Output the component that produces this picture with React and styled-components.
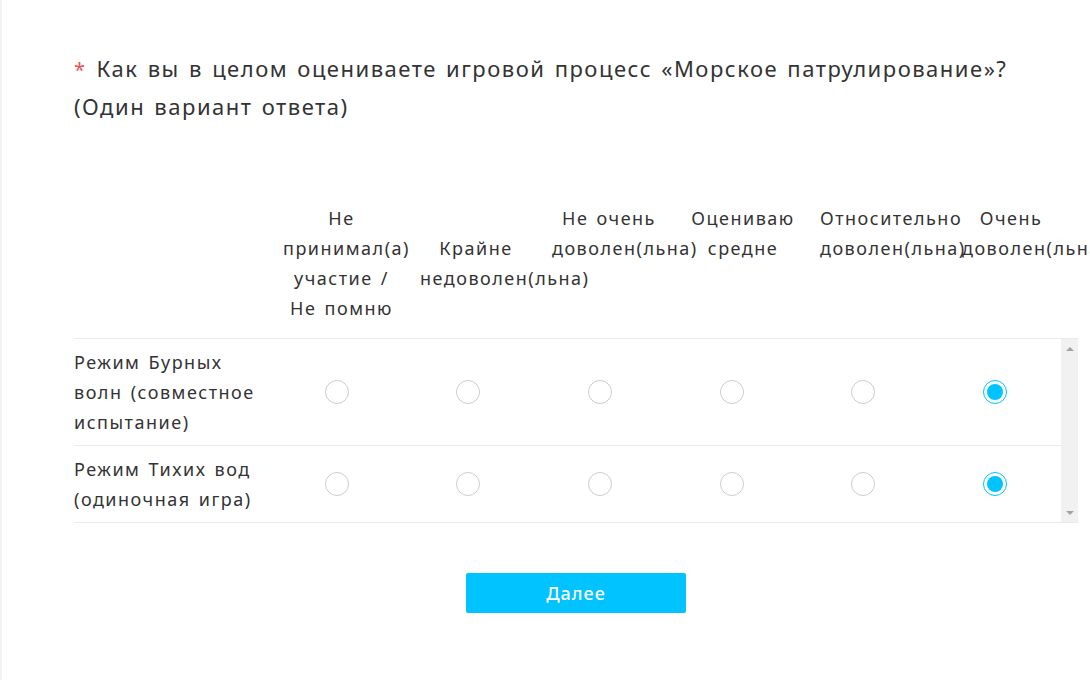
import styled, { createGlobalStyle } from 'styled-components';

const GlobalStyle = createGlobalStyle`
  html, body {
    margin: 0;
    padding: 0;
    background: #f2f2f2;
    overflow: hidden;
  }
  body {
    font-family: "Noto Sans", "Open Sans", "Liberation Sans", sans-serif;
    color: #333333;
    letter-spacing: 1.5px;
    word-spacing: 2px;
  }
`;

const Page = styled.main`
  margin-left: 2px;
  min-height: 680px;
  background: #ffffff;
  padding: 50px 0 0 72px;
  box-sizing: border-box;
`;

const Survey = styled.section`
  width: 1004px;
`;

const Question = styled.h2`
  margin: 0;
  font-size: 22px;
  line-height: 36px;
  font-weight: 400;
  color: #333333;
`;

const Required = styled.span`
  color: #f0504f;
  margin-right: 10px;
  font-size: 20px;
`;

/* заголовок матрицы: колонки разной ширины, как в исходной таблице */
const HeadRow = styled.div`
  display: grid;
  grid-template-columns: 199px 137px 132px 134px 134px 142px 118px;
  margin-top: 79px;
  padding-bottom: 15px;
`;

const HeadCell = styled.div`
  padding: ${(p) => (p.$drop ? '30px' : '0')} 10px 0;
  font-size: 18px;
  line-height: 30px;
  text-align: center;
`;

const Body = styled.div`
  display: flex;
  border-top: 1px solid #ebebeb;
  border-bottom: 1px solid #ebebeb;
`;

const Rows = styled.div`
  flex: 1;
`;

const Row = styled.div`
  display: grid;
  grid-template-columns: 197px repeat(6, 1fr);
  align-items: center;
  padding: 8px 0;
  & + & {
    border-top: 1px solid #ebebeb;
  }
`;

const Label = styled.div`
  font-size: 18px;
  line-height: 30px;
  padding-right: 14px;
`;

const RadioCell = styled.label`
  display: flex;
  justify-content: center;
  align-items: center;
  cursor: pointer;
`;

const Radio = styled.span`
  width: 24px;
  height: 24px;
  box-sizing: border-box;
  border-radius: 50%;
  border: 1px solid ${(p) => (p.$checked ? '#00c3ff' : '#cccccc')};
  background: #ffffff;
  display: flex;
  align-items: center;
  justify-content: center;
  &::after {
    content: '';
    width: 16px;
    height: 16px;
    border-radius: 50%;
    background: #00c3ff;
    display: ${(p) => (p.$checked ? 'block' : 'none')};
  }
`;

const ScrollBar = styled.div`
  width: 17px;
  background: #f1f1f1;
  display: flex;
  flex-direction: column;
  justify-content: space-between;
  align-items: center;
  padding: 8px 0 7px;
`;

const Arrow = styled.span`
  width: 0;
  height: 0;
  border-left: 4px solid transparent;
  border-right: 4px solid transparent;
  ${(p) =>
    p.$down ? 'border-top: 4px solid #a3a3a3;' : 'border-bottom: 4px solid #a3a3a3;'}
`;

const Footer = styled.div`
  display: flex;
  justify-content: center;
  padding-top: 50px;
`;

const NextButton = styled.button`
  width: 220px;
  height: 40px;
  border: none;
  border-radius: 2px;
  background: #00c3ff;
  color: #ffffff;
  font-family: inherit;
  font-size: 18px;
  font-weight: 500;
  letter-spacing: 1px;
  cursor: pointer;
`;

const columns = [
  { text: 'Не принимал(а) участие / Не помню' },
  { text: 'Крайне недоволен(льна)', drop: true },
  { text: 'Не очень доволен(льна)' },
  { text: 'Оцениваю средне' },
  { text: 'Относительно доволен(льна)' },
  { text: 'Очень доволен(льна)' },
];

const rows = [
  { label: 'Режим Бурных волн (совместное испытание)', value: 5 },
  { label: 'Режим Тихих вод (одиночная игра)', value: 5 },
];

const App = () => {
  return (
    <>
      <GlobalStyle />
      <Page>
        <Survey>
          <Question>
            <Required>*</Required>
            Как вы в целом оцениваете игровой процесс «Морское патрулирование»? (Один вариант ответа)
          </Question>

          <HeadRow>
            <HeadCell />
            {columns.map((c) => (
              <HeadCell key={c.text} $drop={c.drop}>
                {c.text}
              </HeadCell>
            ))}
          </HeadRow>

          <Body>
            <Rows>
              {rows.map((r) => (
                <Row key={r.label}>
                  <Label>{r.label}</Label>
                  {columns.map((c, i) => (
                    <RadioCell key={c.text}>
                      <Radio $checked={i === r.value} />
                    </RadioCell>
                  ))}
                </Row>
              ))}
            </Rows>
            <ScrollBar>
              <Arrow />
              <Arrow $down />
            </ScrollBar>
          </Body>

          <Footer>
            <NextButton>Далее</NextButton>
          </Footer>
        </Survey>
      </Page>
    </>
  );
};

export default App;
